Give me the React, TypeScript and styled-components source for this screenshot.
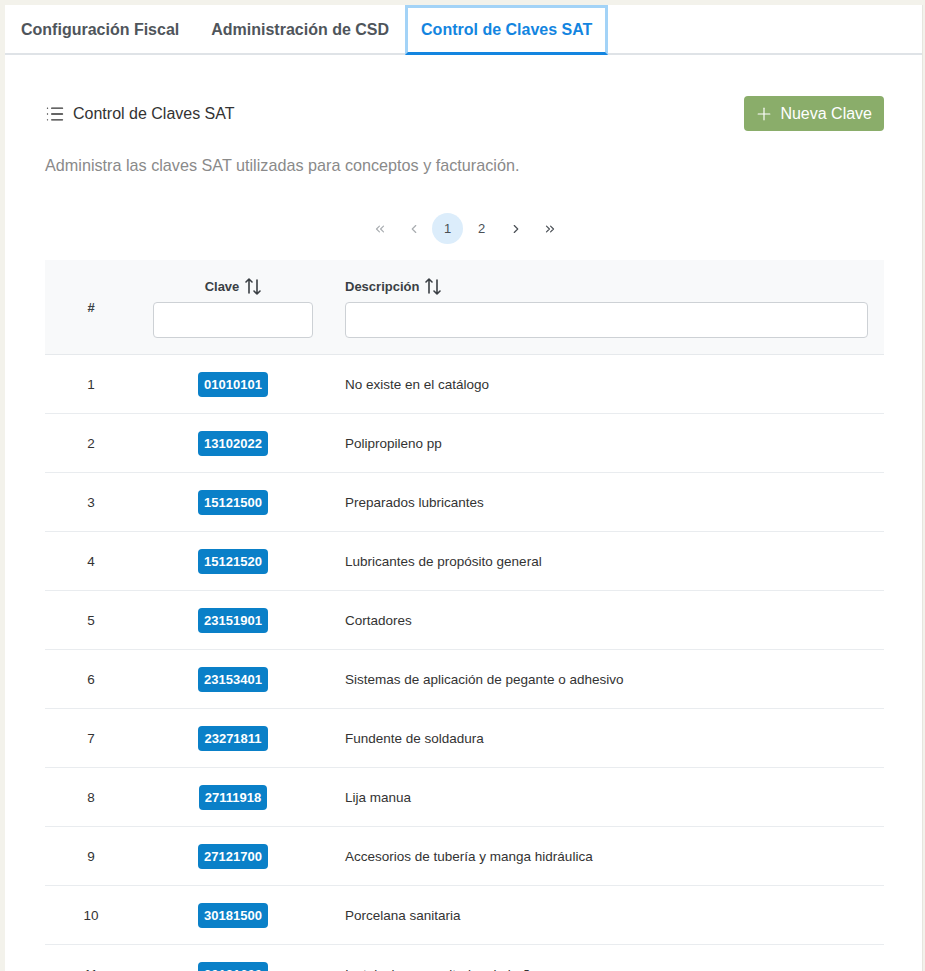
import React from "react"
import styled, { createGlobalStyle } from "styled-components"
import { List, Plus, ChevronsLeft, ChevronLeft, ChevronRight, ChevronsRight } from "lucide-react"

const GlobalStyle = createGlobalStyle`
  * { box-sizing: border-box; }
  body {
    margin: 0;
    background: #f3f2eb;
    font-family: "Liberation Sans", Arial, sans-serif;
    color: #333;
  }
`

const Panel = styled.div`
  margin: 5px 2px 0 5px;
  background: #ffffff;
  border-right: 1px solid #e6e5de;
  min-height: 1200px;
`

const Tabs = styled.div`
  display: flex;
  height: 50px;
  border-bottom: 2px solid #dfe3e7;
`

const Tab = styled.div<{ $active?: boolean }>`
  display: flex;
  align-items: center;
  padding: 0 13px;
  font-size: 16px;
  font-weight: bold;
  color: ${(p) => (p.$active ? "#1385e0" : "#4f555b")};
  border: 3px solid ${(p) => (p.$active ? "#a3d3f7" : "transparent")};
  border-bottom: ${(p) => (p.$active ? "3px solid #1385e0" : "3px solid transparent")};
  margin-bottom: -2px;
`

const Content = styled.div`
  padding: 41px 38px 0 40px;
`

const HeaderRow = styled.div`
  display: flex;
  align-items: center;
  justify-content: space-between;
  height: 35px;
`

const Title = styled.div`
  display: flex;
  align-items: center;
  gap: 8px;
  font-size: 16px;
  color: #333;
`

const PrimaryButton = styled.button`
  display: flex;
  align-items: center;
  gap: 6px;
  height: 35px;
  padding: 0 12px 0 10px;
  border: none;
  border-radius: 4px;
  background: #8aad6a;
  color: #ffffff;
  font-family: inherit;
  font-size: 16px;
`

const Description = styled.p`
  margin: 22px 0 0;
  font-size: 16.2px;
  line-height: 24px;
  color: #8a8a8a;
`

const Pager = styled.div`
  display: flex;
  justify-content: center;
  align-items: center;
  gap: 3px;
  margin-top: 36px;
  margin-bottom: 16px;
`

const PageItem = styled.div<{ $active?: boolean; $disabled?: boolean }>`
  width: 31px;
  height: 31px;
  border-radius: 50%;
  display: flex;
  align-items: center;
  justify-content: center;
  font-size: 13px;
  background: ${(p) => (p.$active ? "#dcedfb" : "transparent")};
  color: ${(p) => (p.$disabled ? "#a9adb1" : "#4a4f55")};
`

const Table = styled.table`
  width: 100%;
  border-collapse: collapse;
  table-layout: fixed;
  font-size: 13.5px;
`

const Th = styled.th<{ $align?: string }>`
  background: #f8f9fa;
  padding: 16px;
  text-align: ${(p) => p.$align || "left"};
  vertical-align: middle;
  font-weight: bold;
  font-size: 13px;
  color: #3a3f44;
  border-bottom: 1px solid #e6e9ec;
`

const HeadLabel = styled.div<{ $center?: boolean }>`
  display: flex;
  align-items: center;
  justify-content: ${(p) => (p.$center ? "center" : "flex-start")};
  gap: 6px;
  height: 20px;
  margin-bottom: 6px;
`

const FilterInput = styled.input`
  display: block;
  width: 100%;
  height: 36px;
  border: 1px solid #cdd1d5;
  border-radius: 4px;
  background: #ffffff;
`

const Td = styled.td<{ $align?: string }>`
  height: 59px;
  padding: 0 16px;
  text-align: ${(p) => p.$align || "left"};
  vertical-align: middle;
  color: #333;
  border-bottom: 1px solid #e9ecef;
`

const Badge = styled.span`
  display: inline-block;
  padding: 5px 6px;
  border-radius: 4px;
  background: #0a80c8;
  color: #ffffff;
  font-weight: bold;
  font-size: 13px;
  line-height: 15px;
`

const SortIcon = () => (
  <svg width="16" height="18" viewBox="0 0 16 18" fill="none" stroke="#3a3f44" strokeWidth="1.6" strokeLinecap="round" strokeLinejoin="round">
    <path d="M4 16V2M1 5l3-3 3 3" />
    <path d="M12 3v14M9 14l3 3 3-3" />
  </svg>
)

const rows: [string, string][] = [
  ["01010101", "No existe en el catálogo"],
  ["13102022", "Polipropileno pp"],
  ["15121500", "Preparados lubricantes"],
  ["15121520", "Lubricantes de propósito general"],
  ["23151901", "Cortadores"],
  ["23153401", "Sistemas de aplicación de pegante o adhesivo"],
  ["23271811", "Fundente de soldadura"],
  ["27111918", "Lija manua"],
  ["27121700", "Accesorios de tubería y manga hidráulica"],
  ["30181500", "Porcelana sanitaria"],
  ["30181600", "Instalaciones sanitarias de baño"],
  ["31201500", "Cinta adhesiva"],
]

export default function App() {
  return (
    <>
      <GlobalStyle />
      <Panel>
        <Tabs>
          <Tab>Configuración Fiscal</Tab>
          <Tab>Administración de CSD</Tab>
          <Tab $active>Control de Claves SAT</Tab>
        </Tabs>
        <Content>
          <HeaderRow>
            <Title>
              <List size={20} strokeWidth={1.6} color="#333" />
              Control de Claves SAT
            </Title>
            <PrimaryButton>
              <Plus size={20} strokeWidth={1.4} />
              Nueva Clave
            </PrimaryButton>
          </HeaderRow>
          <Description>Administra las claves SAT utilizadas para conceptos y facturación.</Description>
          <Pager>
            <PageItem $disabled><ChevronsLeft size={14} /></PageItem>
            <PageItem $disabled><ChevronLeft size={14} /></PageItem>
            <PageItem $active>1</PageItem>
            <PageItem>2</PageItem>
            <PageItem><ChevronRight size={14} /></PageItem>
            <PageItem><ChevronsRight size={14} /></PageItem>
          </Pager>
          <Table>
            <colgroup>
              <col style={{ width: 92 }} />
              <col style={{ width: 192 }} />
              <col />
            </colgroup>
            <thead>
              <tr>
                <Th $align="center">#</Th>
                <Th>
                  <HeadLabel $center>Clave <SortIcon /></HeadLabel>
                  <FilterInput />
                </Th>
                <Th>
                  <HeadLabel>Descripción <SortIcon /></HeadLabel>
                  <FilterInput />
                </Th>
              </tr>
            </thead>
            <tbody>
              {rows.map(([clave, desc], i) => (
                <tr key={clave}>
                  <Td $align="center">{i + 1}</Td>
                  <Td $align="center"><Badge>{clave}</Badge></Td>
                  <Td>{desc}</Td>
                </tr>
              ))}
            </tbody>
          </Table>
        </Content>
      </Panel>
    </>
  )
}
